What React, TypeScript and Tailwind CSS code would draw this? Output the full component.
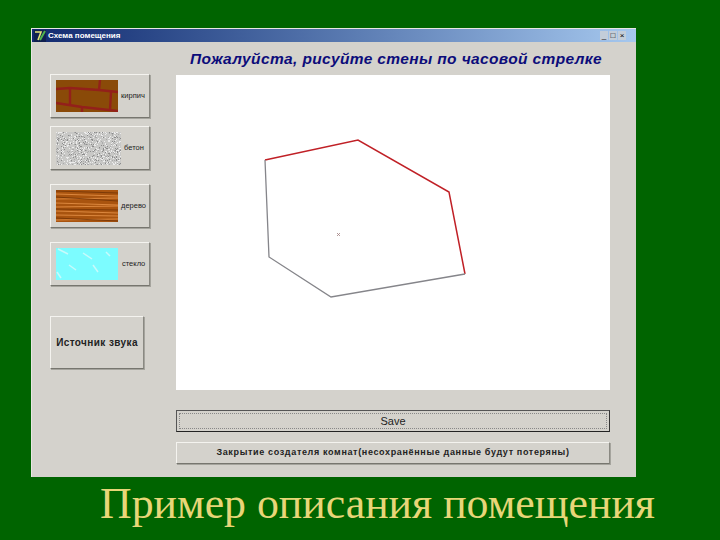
const raised =
  "border border-t-[#f4f3ef] border-l-[#f4f3ef] border-r-[#8a8982] border-b-[#77766f] shadow-[1px_1px_0_#a5a49d]";

const BrickIcon = () => (
  <svg width="62" height="32" viewBox="0 0 62 32" className="block">
    <rect width="62" height="32" fill="#8a4a08" />
    <g stroke="#93201a" strokeWidth="2.4" fill="none">
      <path d="M0 9 L14 8 L43 10 L62 12" />
      <path d="M0 23 L26 27 L62 31" />
      <path d="M14 8 L14 24" />
      <path d="M43 10 L44 0" />
      <path d="M55 12 L54 30" />
      <path d="M26 27 L26 32" />
    </g>
  </svg>
);

// speckle for the concrete swatch, fixed so it doesn't change between renders
const rnd = (n: number) => {
  const v = Math.sin(n * 12.9898) * 43758.5453;
  return v - Math.floor(v);
};
const speckle = Array.from({ length: 800 }, (_, i) => ({
  x: Math.floor(rnd(i + 1) * 65),
  y: Math.floor(rnd(i + 1000) * 33),
  c: i % 4 === 0 ? "#8c8c8c" : i % 4 === 1 ? "#ababab" : "#ececec",
}));

const ConcreteIcon = () => (
  <svg width="65" height="33" viewBox="0 0 65 33" className="block">
    <rect width="65" height="33" fill="#c8c8c6" />
    {speckle.map((s, i) => (
      <rect key={i} x={s.x} y={s.y} width="1" height="1" fill={s.c} />
    ))}
  </svg>
);

const WoodIcon = () => (
  <svg width="62" height="32" viewBox="0 0 62 32" className="block">
    <rect width="62" height="32" fill="#a9540f" />
    <g stroke="#e8944a" strokeWidth="0.8" fill="none">
      <path d="M0 4 L62 6" />
      <path d="M0 9 L62 8" />
      <path d="M0 13 L62 15" />
      <path d="M0 17 L62 16" />
      <path d="M0 21 L62 23" />
      <path d="M0 25 L62 26" />
      <path d="M0 30 L62 29" />
    </g>
    <g stroke="#713406" strokeWidth="0.8" fill="none">
      <path d="M0 1 L62 3" />
      <path d="M0 7 L62 11" />
      <path d="M0 19 L62 20" />
      <path d="M0 28 L62 31" />
    </g>
  </svg>
);

const GlassIcon = () => (
  <svg width="62" height="32" viewBox="0 0 62 32" className="block">
    <rect width="62" height="32" fill="#7cfcff" />
    <g stroke="#c8fafb" strokeWidth="1.5" fill="none">
      <path d="M2 1 L12 6" />
      <path d="M27 5 L36 11" />
      <path d="M50 4 L54 8" />
      <path d="M13 17 L20 22" />
      <path d="M37 17 L42 24" />
      <path d="M1 24 L5 30" />
    </g>
  </svg>
);

const materials = [
  { label: "кирпич", icon: <BrickIcon />, pl: "pl-[3px]", mt: "" },
  { label: "бетон", icon: <ConcreteIcon />, pl: "pl-[3px]", mt: "mt-[8px]" },
  { label: "дерево", icon: <WoodIcon />, pl: "pl-[3px]", mt: "mt-[14px]" },
  { label: "стекло", icon: <GlassIcon />, pl: "pl-[4px]", mt: "mt-[14px]" },
];

export default function App() {
  return (
    <div
      className="w-[720px] h-[540px] overflow-hidden bg-[#006400] pl-[31px] pt-[28px]"
      style={{ fontFamily: '"Liberation Sans", Arial, sans-serif' }}
    >
      {/* WINDOW */}
      <div className="w-[605px] h-[449px] bg-[#d4d2cc] border-t border-l border-[#e8e7e2] flex flex-col">
        <div className="h-[13px] flex items-center justify-between bg-gradient-to-r from-[#12296f] to-[#a6c8ee] pl-[2px] pr-[10px]">
          <div className="flex items-center gap-[2px]">
            <svg width="12" height="12" viewBox="0 0 12 12">
              <rect width="12" height="12" fill="#10204f" />
              <path d="M1 2 H7 L4 10" stroke="#e6e27a" strokeWidth="1.6" fill="none" />
              <path d="M11 1 L6 10" stroke="#4fb34f" strokeWidth="2" fill="none" />
            </svg>
            <span className="text-[8px] leading-none font-bold text-white">Схема помещения</span>
          </div>
          <div className="flex gap-px">
            {["_", "□", "×"].map((c) => (
              <span
                key={c}
                className="w-[8px] h-[9px] bg-[#c3cdd9] text-[8px] leading-[9px] text-black text-center"
              >
                {c}
              </span>
            ))}
          </div>
        </div>

        <div className="flex flex-1">
          {/* LEFT TOOLS */}
          <div className="w-[144px] pl-[18px] pt-[32px] flex flex-col">
            {materials.map((m) => (
              <button
                key={m.label}
                className={`w-[100px] h-[44px] bg-[#d4d2cc] flex items-center pl-[5px] ${raised} ${m.mt}`}
              >
                {m.icon}
                <span className={`text-[7.5px] leading-none text-[#222] ${m.pl}`}>{m.label}</span>
              </button>
            ))}
            <button
              className={`mt-[30px] w-[94px] h-[53px] bg-[#d4d2cc] text-[10px] font-bold tracking-[0.4px] text-[#222] ${raised}`}
            >
              Источник звука
            </button>
          </div>

          {/* RIGHT SIDE */}
          <div className="w-[434px] flex flex-col">
            <div className="h-[33px] pl-[14px] pt-[8px] text-[15.5px] leading-[17px] font-bold italic tracking-[0.37px] text-[#0c0c7a] whitespace-nowrap">
              Пожалуйста, рисуйте стены по часовой стрелке
            </div>
            <div className="w-[434px] h-[315px] bg-white">
              <svg width="434" height="315" viewBox="176 75 434 315" className="block">
                <polyline
                  points="265,160 358,140 449,192 465,274"
                  fill="none"
                  stroke="#c02026"
                  strokeWidth="1.5"
                />
                <polyline
                  points="465,274 331,297 269,257 265,160"
                  fill="none"
                  stroke="#85858a"
                  strokeWidth="1.3"
                />
                <path d="M337 233 L340 236 M340 233 L337 236" stroke="#a08080" strokeWidth="0.8" />
              </svg>
            </div>
            <button className="mt-[20px] h-[22px] bg-[#d4d2cc] border border-t-[#555] border-l-[#555] border-r-[#333] border-b-[#222] p-[2px]">
              <span className="flex h-full items-center justify-center border border-dotted border-[#888] text-[11px] text-[#222]">
                Save
              </span>
            </button>
            <button
              className={`mt-[10px] h-[22px] bg-[#d4d2cc] text-[9px] font-bold tracking-[0.65px] text-[#222] ${raised}`}
            >
              Закрытие создателя комнат(несохранённые данные будут потеряны)
            </button>
          </div>
        </div>
      </div>

      {/* CAPTION */}
      <div
        className="pl-[69px] pt-[1px] text-[43.8px] leading-[50px] text-[#e8d678] whitespace-nowrap"
        style={{ fontFamily: '"Liberation Serif", "Times New Roman", serif' }}
      >
        Пример описания помещения
      </div>
    </div>
  );
}
